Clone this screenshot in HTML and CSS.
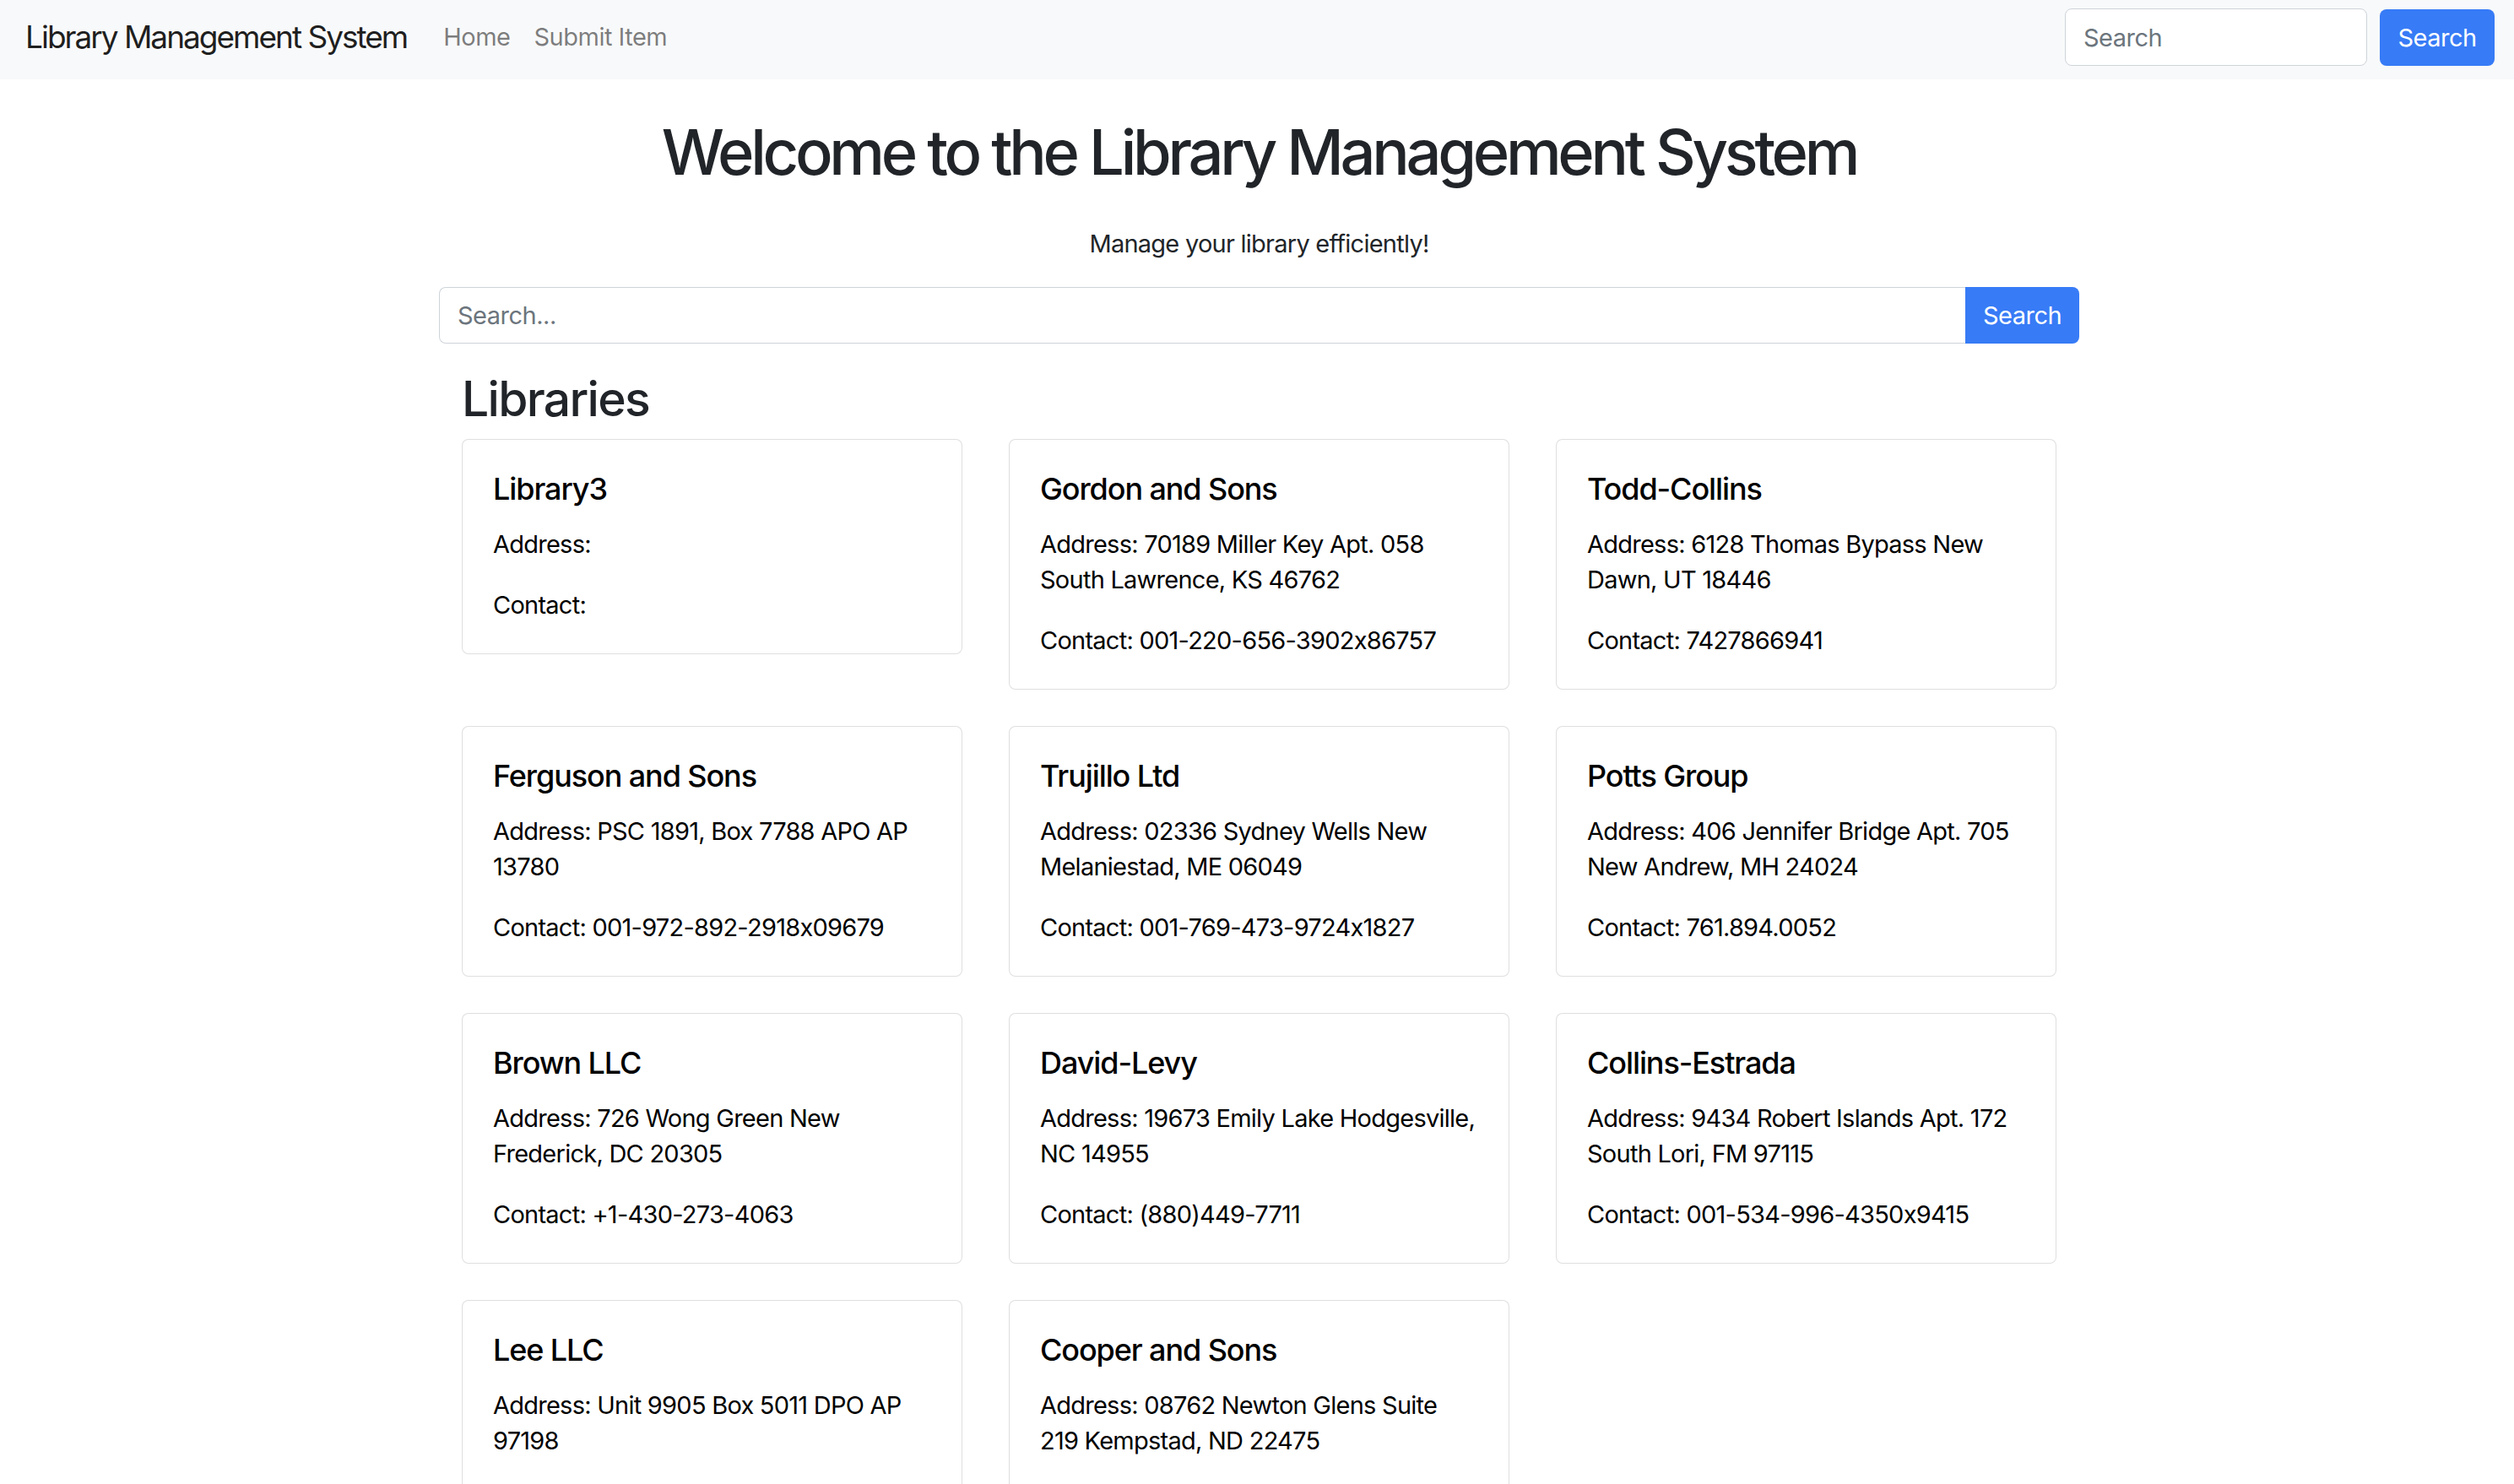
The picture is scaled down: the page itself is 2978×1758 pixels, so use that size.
FILE: index.html
```html
<!DOCTYPE html>
<html lang="en">
<head>
<meta charset="utf-8">
<title>Library Management System</title>
<link rel="stylesheet" href="styles.css">
</head>
<body>
<nav class="navbar">
  <a class="brand" href="#">Library Management System</a>
  <ul class="nav-links">
    <li><a href="#">Home</a></li>
    <li><a href="#">Submit Item</a></li>
  </ul>
  <form class="nav-search">
    <input type="search" placeholder="Search">
    <button type="button">Search</button>
  </form>
</nav>
<main class="container">
  <h1 class="title">Welcome to the Library Management System</h1>
  <p class="lead">Manage your library efficiently!</p>
  <form class="search-group">
    <input type="text" placeholder="Search...">
    <button type="button">Search</button>
  </form>
  <section class="libraries">
    <h2>Libraries</h2>
    <div class="grid">
      <div class="card"><h5>Library3</h5><p>Address: </p><p>Contact: </p></div>
      <div class="card"><h5>Gordon and Sons</h5><p>Address: 70189 Miller Key Apt. 058 South Lawrence, KS 46762</p><p>Contact: 001-220-656-3902x86757</p></div>
      <div class="card"><h5>Todd-Collins</h5><p>Address: 6128 Thomas Bypass New Dawn, UT 18446</p><p>Contact: 7427866941</p></div>
      <div class="card"><h5>Ferguson and Sons</h5><p>Address: PSC 1891, Box 7788 APO AP 13780</p><p>Contact: 001-972-892-2918x09679</p></div>
      <div class="card"><h5>Trujillo Ltd</h5><p>Address: 02336 Sydney Wells New Melaniestad, ME 06049</p><p>Contact: 001-769-473-9724x1827</p></div>
      <div class="card"><h5>Potts Group</h5><p>Address: 406 Jennifer Bridge Apt. 705 New Andrew, MH 24024</p><p>Contact: 761.894.0052</p></div>
      <div class="card"><h5>Brown LLC</h5><p>Address: 726 Wong Green New Frederick, DC 20305</p><p>Contact: +1-430-273-4063</p></div>
      <div class="card"><h5>David-Levy</h5><p>Address: 19673 Emily Lake Hodgesville, NC 14955</p><p>Contact: (880)449-7711</p></div>
      <div class="card"><h5>Collins-Estrada</h5><p>Address: 9434 Robert Islands Apt. 172 South Lori, FM 97115</p><p>Contact: 001-534-996-4350x9415</p></div>
      <div class="card"><h5>Lee LLC</h5><p>Address: Unit 9905 Box 5011 DPO AP 97198</p><p>Contact: 001-293-411-5502</p></div>
      <div class="card"><h5>Cooper and Sons</h5><p>Address: 08762 Newton Glens Suite 219 Kempstad, ND 22475</p><p>Contact: 505-726-8140</p></div>
    </div>
  </section>
</main>
</body>
</html>
```
FILE: styles.css
```css
* { box-sizing: border-box; }
html, body { margin: 0; padding: 0; }
body {
  font-family: Inter, "Noto Sans", sans-serif;
  font-feature-settings: "calt" 0;
  color: #212529;
  background: #fff;
  font-size: 30px;
  line-height: 42px;
  letter-spacing: -0.75px;
}
a { text-decoration: none; }
input, button { font-feature-settings: "calt" 0; letter-spacing: -0.5px; }

.navbar {
  display: flex;
  align-items: center;
  height: 94px;
  padding: 0 23px 6px 30px;
  background: #f8f9fa;
}
.brand {
  font-size: 37px;
  line-height: 52px;
  letter-spacing: -2px;
  color: rgba(0,0,0,.9);
  margin-right: 29px;
}
.nav-links {
  display: flex;
  list-style: none;
  margin: 0;
  padding: 0;
}
.nav-links a {
  display: block;
  padding: 0 14px;
  font-size: 29px;
  letter-spacing: -0.5px;
  color: rgba(0,0,0,.5);
}
.nav-search {
  margin-left: auto;
  display: flex;
  gap: 15px;
  align-items: center;
}
.nav-search input {
  width: 358px;
  height: 68px;
  border: 1px solid #ced4da;
  border-radius: 8px;
  padding: 0 21px;
  font-family: inherit;
  font-size: 29px;
  color: #495057;
  background: #fff;
}
.nav-search button {
  width: 136px;
  height: 67px;
  border: none;
  border-radius: 8px;
  background: #377bf6;
  color: #fff;
  font-family: inherit;
  font-size: 29px;
}
input::placeholder { color: #6c757d; }

.container {
  width: 1943px;
  margin-left: calc(50% - 969px);
}
.title {
  margin: 41px 0 43px;
  text-align: center;
  font-size: 74px;
  line-height: 90px;
  letter-spacing: -4.3px;
  font-weight: 500;
  color: #212529;
}
.lead {
  margin: 0 0 30px;
  text-align: center;
  font-size: 29px;
  color: #212529;
}
.search-group {
  display: flex;
  height: 67px;
  margin-bottom: 31px;
}
.search-group input {
  flex: 1;
  height: 67px;
  border: 1px solid #ced4da;
  border-right: none;
  border-radius: 8px 0 0 8px;
  padding: 0 21px;
  font-family: inherit;
  font-size: 29px;
  color: #495057;
}
.search-group button {
  width: 135px;
  height: 67px;
  border: none;
  border-radius: 0 8px 8px 0;
  background: #377bf6;
  color: #fff;
  font-family: inherit;
  font-size: 29px;
}

.libraries {
  padding: 0 27px;
}
.libraries h2 {
  margin: 0 0 12px;
  font-size: 57px;
  line-height: 70px;
  letter-spacing: -1.7px;
  font-weight: 500;
  color: #212529;
}
.grid {
  display: grid;
  grid-template-columns: repeat(3, 593px);
  column-gap: 55px;
  row-gap: 43px;
  align-items: start;
}
.card {
  border: 1px solid rgba(0,0,0,.125);
  border-radius: 8px;
  padding: 36px;
  color: #000;
  background: #fff;
}
.card h5 {
  margin: 0 0 22px;
  font-size: 36px;
  line-height: 45px;
  letter-spacing: -1.1px;
  font-weight: 500;
}
.card p {
  margin: 0 0 30px;
  font-size: 29px;
  line-height: 42px;
}
.card p:last-child { margin-bottom: 0; }
```
